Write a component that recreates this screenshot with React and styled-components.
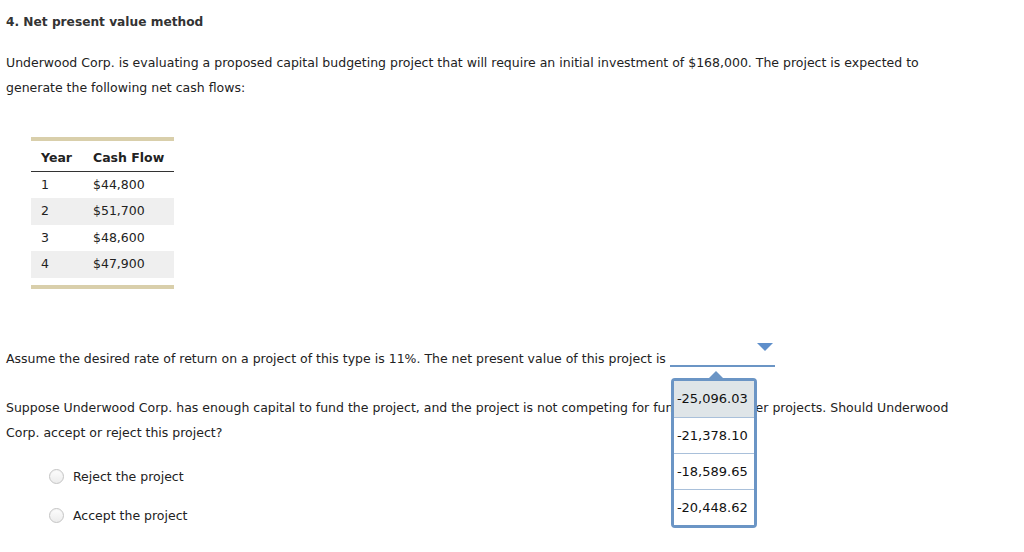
import React, { useState } from 'react';
import styled, { createGlobalStyle } from 'styled-components';

const GlobalStyle = createGlobalStyle`
  body {
    margin: 0;
    background: #fff;
    font-family: Verdana, "DejaVu Sans", sans-serif;
    font-size: 12.5px;
    color: #222;
  }
`;

const Page = styled.div`
  padding: 0 6px;
  width: 955px;
`;

const Title = styled.h2`
  margin: 14px 0 0;
  font-size: 12.2px;
  line-height: 16px;
  font-weight: bold;
  color: #333;
`;

const Para = styled.p`
  margin: ${(p) => p.$top}px 0 0;
  line-height: 25px;
`;

const Frame = styled.div`
  margin: 37px 0 0 25px;
  width: 143px;
  border-top: 4px solid #d9cfab;
  border-bottom: 4px solid #d9cfab;
  padding-bottom: 7px;
`;

const Table = styled.table`
  width: 100%;
  border-collapse: collapse;
`;

const Th = styled.th`
  text-align: left;
  font-weight: bold;
  padding: 9px 0 5px 10px;
  line-height: 16px;
  border-bottom: 1px solid #333;
  width: ${(p) => p.$w || 'auto'};
`;

const Row = styled.tr`
  height: 26.5px;
  background: ${(p) => (p.$shade ? '#efefef' : '#fff')};
`;

const Td = styled.td`
  padding: 0 0 0 10px;
  line-height: 16px;
`;

const Select = styled.span`
  position: relative;
  display: inline-block;
  width: 105px;
  height: 16px;
  margin-left: 4px;
  border-bottom: 2px solid #6b95c5;
  vertical-align: -4px;
`;

const Arrow = styled.span`
  position: absolute;
  right: 2px;
  top: -6px;
  width: 0;
  height: 0;
  border-left: 8px solid transparent;
  border-right: 8px solid transparent;
  border-top: 8px solid #5f8fcb;
`;

const Popup = styled.ul`
  position: absolute;
  left: 1px;
  top: 29px;
  width: 80px;
  margin: 0;
  padding: 0;
  list-style: none;
  background: #fff;
  border: 3px solid #6b95c5;
  border-radius: 4px;
  z-index: 2;
  line-height: 16px;
  font-size: 13px;

  &::before {
    content: '';
    position: absolute;
    left: 35px;
    top: -10px;
    border-left: 7px solid transparent;
    border-right: 7px solid transparent;
    border-bottom: 7px solid #6b95c5;
  }
`;

const Option = styled.li`
  height: 36px;
  box-sizing: border-box;
  padding: 10px 0 0 3px;
  background: ${(p) => (p.$active ? '#dfe5e8' : '#fff')};
  border-top: ${(p) => (p.$first ? 'none' : '1px solid #a9c0da')};
  color: #111;
`;

const Choices = styled.div`
  margin: 12px 0 0 43px;
`;

const Choice = styled.label`
  display: flex;
  align-items: center;
  gap: 9px;
  height: 39px;
  cursor: pointer;
`;

const Radio = styled.span`
  width: 13px;
  height: 13px;
  border-radius: 50%;
  border: 1px solid #c4c4c4;
  background: linear-gradient(#fdfdfd, #ececec);
  box-shadow: inset 0 1px 1px rgba(0, 0, 0, 0.04);
`;

const flows = [
  ['1', '$44,800'],
  ['2', '$51,700'],
  ['3', '$48,600'],
  ['4', '$47,900'],
];

const options = ['-25,096.03', '-21,378.10', '-18,589.65', '-20,448.62'];

const App = () => {
  const [picked, setPicked] = useState(null);

  return (
    <Page>
      <GlobalStyle />
      <Title>4. Net present value method</Title>
      <Para $top={20}>
        Underwood Corp. is evaluating a proposed capital budgeting project that will require an initial
        investment of $168,000. The project is expected to generate the following net cash flows:
      </Para>

      <Frame>
        <Table>
          <thead>
            <tr>
              <Th $w="42px">Year</Th>
              <Th>Cash Flow</Th>
            </tr>
          </thead>
          <tbody>
            {flows.map(([year, cash], i) => (
              <Row key={year} $shade={i % 2 === 1}>
                <Td>{year}</Td>
                <Td>{cash}</Td>
              </Row>
            ))}
          </tbody>
        </Table>
      </Frame>

      <Para $top={57}>
        Assume the desired rate of return on a project of this type is 11%. The net present value of this project is
        <Select>
          <Arrow />
          <Popup>
            {options.map((o, i) => (
              <Option key={o} $first={i === 0} $active={i === 0}>
                {o}
              </Option>
            ))}
          </Popup>
        </Select>
      </Para>

      <Para $top={24}>
        Suppose Underwood Corp. has enough capital to fund the project, and the project is not competing for funding with other projects. Should Underwood Corp. accept or reject this project?
      </Para>

      <Choices>
        {['Reject the project', 'Accept the project'].map((c) => (
          <Choice key={c} onClick={() => setPicked(c)}>
            <Radio />
            {c}
          </Choice>
        ))}
      </Choices>
    </Page>
  );
};

export default App;
